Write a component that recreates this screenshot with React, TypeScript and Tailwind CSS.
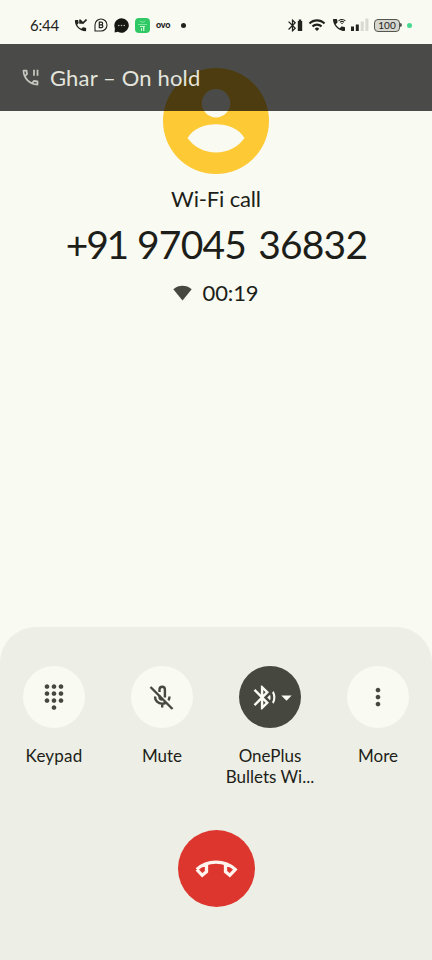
import React from 'react';
import {
  MdArrowDropDown,
  MdBluetooth,
  MdBluetoothAudio,
  MdDialpad,
  MdMoreVert,
  MdOutlinePhonePaused,
  MdPhone,
  MdWifi,
  MdWifiCalling3,
} from 'react-icons/md';

const StatusBar = () => {
  return (
    <div className="h-11 pt-[6px] pl-[30px] pr-[20px] flex items-center text-[#22231e]">
      <span className="w-[44px] text-[15px] tracking-[-0.2px]">6:44</span>
      <div className="relative size-[13px]">
        <MdPhone size={15} className="absolute -left-[1px] -top-[1px]" />
        <svg className="absolute left-[5px] top-0" width="8" height="7" viewBox="0 0 8 7" fill="none" stroke="currentColor" strokeWidth="1.6">
          <path d="M1 .5v3.500h3.500M1 1l3 3 3.500-3.500" />
        </svg>
      </div>
      <svg className="ml-[7px]" width="14" height="14" viewBox="0 0 14 14" fill="none" stroke="currentColor">
        <path d="M1 13V7a6 6 0 1 1 6 6z" strokeWidth="1.1" />
        <path d="M5.300 4.200h2a1.300 1.300 0 0 1 0 2.700h-2zM5.300 6.900h2.200a1.400 1.400 0 0 1 0 2.800H5.300z" strokeWidth="1.2" />
      </svg>
      <svg className="ml-[6px]" width="15" height="15" viewBox="0 0 15 15">
        <path d="M7.500.3a7.200 7.200 0 1 1-3.600 13.400L.6 14.500l.3-4.200A7.200 7.200 0 0 1 7.500.3z" fill="#161713" />
        <g fill="#b9bab3">
          <circle cx="4.800" cy="7.500" r=".8" />
          <circle cx="7.500" cy="7.500" r=".8" />
          <circle cx="10.200" cy="7.500" r=".8" />
        </g>
      </svg>
      <svg className="ml-[6px]" width="15" height="15" viewBox="0 0 15 15">
        <rect width="15" height="15" rx="4" fill="#30c765" />
        <path d="M4.800 2.700a2.800 2 0 0 0 5.400 0" fill="none" stroke="#7ce69b" />
        <path d="M3 6h9v1H3z" fill="#7ce69b" />
        <path d="M5 8h5v1H5zM6 10h1v3H6zM8 9h1.400v4H8z" fill="#c4f6d2" />
      </svg>
      <span className="ml-[6px] w-[15px] text-[9px] leading-none font-black tracking-[-0.2px] -mt-[2px]">ovo</span>
      <span className="ml-[10px] size-[5px] rounded-full bg-[#22231e]" />

      <div className="ml-auto flex items-center">
        <MdBluetooth size={15} className="-mr-[3px]" />
        <svg width="6" height="13" viewBox="0 0 6 13">
          <path d="M1.800.5h2.400V2h1v10H.8V2h1z" fill="currentColor" />
        </svg>
        <MdWifi size={18} className="ml-[5px]" />
        <MdWifiCalling3 size={16} className="ml-[5px]" />
        <svg className="ml-[4px]" width="18" height="14" viewBox="0 0 18 14">
          <path d="M0 8.500h3V13H0zM4.800 6.500h3V13h-3z" fill="#22231e" />
          <path d="M9.700 3.500h3V13h-3zM14.400.5h3V13h-3z" fill="#d9dad2" />
        </svg>
        <div className="ml-[5px] w-[26px] h-[13px] rounded-[4px] border border-[#55564f] bg-[#d6d7cf] flex items-center justify-center text-[10px] leading-none">
          100
        </div>
        <span className="w-[2px] h-[4px] rounded-r-full bg-[#55564f]" />
        <span className="ml-[5px] size-[5px] rounded-full bg-[#47d990]" />
      </div>
    </div>
  );
};

const HoldBanner = () => {
  return (
    <div className="relative z-10 h-[67px] pl-5 flex items-center bg-black/70 text-[#e4e5dd]">
      <MdOutlinePhonePaused size={21} className="text-[#c6c7be]" />
      <span className="ml-[9px] text-[22px] tracking-[0.15px]">Ghar – On hold</span>
    </div>
  );
};

const Caller = () => {
  return (
    <div className="flex flex-col items-center">
      <svg className="-mt-[43px]" width="106" height="106" viewBox="0 0 106 106">
        <circle cx="53" cy="53" r="53" fill="#fdc935" />
        <circle cx="53" cy="35.300" r="14.200" fill="#f9faf1" />
        <path d="M24.500 70C30 60.500 42 56.300 53 56.300S76 60.500 81.500 70C75 79.500 64 84.500 53 84.500S31 79.500 24.500 70z" fill="#f9faf1" />
      </svg>
      <p className="mt-[10px] text-[22px] leading-[30px] tracking-[-0.15px]">Wi-Fi call</p>
      <h1 className="mt-[5px] ml-[1px] flex text-[39px] leading-[50px] tracking-[-0.8px] whitespace-nowrap">
        <span className="tracking-[-2.200px]">+91</span>
        <span className="ml-[10px]">97045</span>
        <span className="ml-[12px]">36832</span>
      </h1>
      <div className="mt-[9px] flex items-center">
        <svg width="19" height="16" viewBox="0 0 19 16">
          <path d="M.3 4.200C5.600-.3 13.400-.3 18.700 4.200L9.500 15.500z" fill="#47483f" />
        </svg>
        <span className="ml-[10px] text-[22px] leading-[30px] tracking-[-0.1px]">00:19</span>
      </div>
    </div>
  );
};

const MuteIcon = () => {
  return (
    <svg width="28" height="28" viewBox="0 0 28 28" fill="none" stroke="currentColor" strokeWidth="2.400">
      <path d="M2.500 4l22 22" />
      <path d="M11.500 9V6.400a2.700 2.700 0 0 1 5.400 0V14.500" />
      <path d="M7 13.500a7.100 7.100 0 0 0 7.200 7.300c1.400 0 2.400-.3 3.400-.9M14.200 20v4.600M21.500 13.500c0 1.400-.4 2.700-1.100 3.800M11.500 12.500v1.300c0 1.500 1.200 2.700 2.700 2.700" />
    </svg>
  );
};

type ActionProps = {
  label: React.ReactNode;
  active?: boolean;
  children: React.ReactNode;
};

const Action = ({ label, active, children }: ActionProps) => {
  return (
    <button className="w-[108px] flex flex-col items-center">
      <span
        className={
          active
            ? 'size-[62px] rounded-full flex items-center justify-center bg-[#46473f] text-[#f9faf1]'
            : 'size-[62px] rounded-full flex items-center justify-center bg-[#f9faf1] text-[#46473f]'
        }
      >
        {children}
      </span>
      <span className="mt-[17px] text-[17px] leading-[21px] whitespace-nowrap">{label}</span>
    </button>
  );
};

const App = () => {
  return (
    <div className="w-[432px] h-[960px] overflow-hidden flex flex-col bg-[#f9faf1] text-[#1d1e19] font-['Lato',sans-serif]">
      <StatusBar />
      <HoldBanner />
      <Caller />

      <div className="mt-auto h-[333px] shrink-0 rounded-t-[36px] bg-[#edeee5] pt-[39px] flex flex-col items-center">
        <div className="flex h-[164px]">
          <Action label={<span className="tracking-[0.2px]">Keypad</span>}>
            <MdDialpad size={28} />
          </Action>
          <Action label="Mute">
            <MuteIcon />
          </Action>
          <Action active label={<>OnePlus<br />Bullets Wi...</>}>
            <MdBluetoothAudio size={29} className="ml-[3px]" />
            <MdArrowDropDown size={25} className="-ml-[5px] -mr-[6px]" />
          </Action>
          <Action label="More">
            <MdMoreVert size={28} />
          </Action>
        </div>
        <button className="size-[77px] rounded-full bg-[#dc362e] flex items-center justify-center">
          <svg width="44" height="20" viewBox="0 0 44 20" fill="none" stroke="#fff4ee" strokeWidth="3.300">
            <path d="M2.800 10.500C8 5.600 14.500 3.200 22 3.200S36 5.600 41.200 10.500L35.800 16.300L31.500 12.800V5M2.800 10.500L8.200 16.300L12.500 12.800V5" />
          </svg>
        </button>
      </div>
    </div>
  );
};

export default App;
